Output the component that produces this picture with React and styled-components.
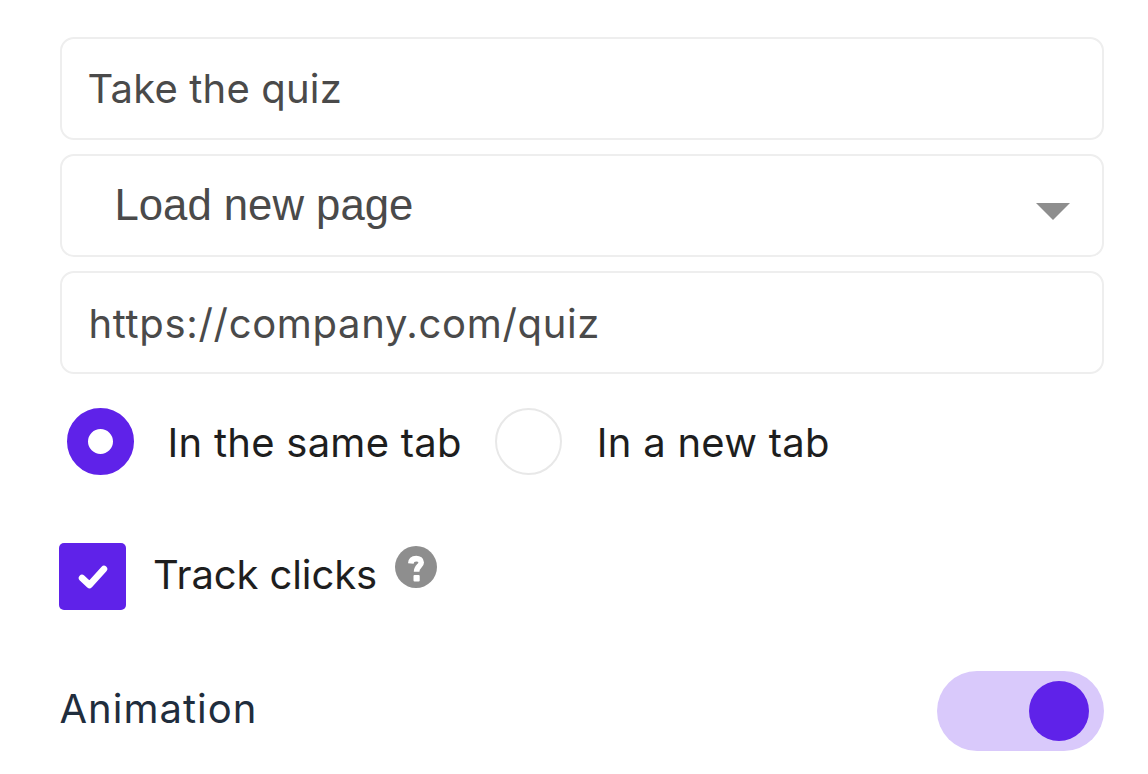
import React from 'react';
import styled, { createGlobalStyle } from 'styled-components';

const Global = createGlobalStyle`
  html, body { margin: 0; padding: 0; background: #fff; }
  body { font-family: "Open Sans", sans-serif; }
`;
const Page = styled.div`
  width: 1148px; height: 774px; box-sizing: border-box; overflow: hidden;
  padding: 37px 44.5px 0 59.5px;
  display: flex; flex-direction: column;
`;
const Fields = styled.div`
  display: flex; flex-direction: column; gap: 14px;
`;
const Field = styled.div`
  height: 103px; box-sizing: border-box;
  border: 2px solid #eeeeee; border-radius: 14px; background: #fff;
  display: flex; align-items: center; justify-content: space-between;
  padding: 0 32px ${p => p.$lift || 0}px ${p => p.$inset || 26}px;
  padding-top: ${p => p.$drop || 0}px;
  font-family: ${p => p.$native ? '"Liberation Sans"' : '"Inter"'}, sans-serif;
  font-size: ${p => p.$size || 40}px;
  color: #4a4a4a;
  letter-spacing: ${p => p.$track || 0}px;
`;
const Arrow = styled.svg`
  width: 34px; height: 17px; display: block; margin-top: 14px;
`;
const RadioRow = styled.div`
  display: flex; align-items: center; margin-top: 34px; padding-left: 7px;
`;
const Radio = styled.span`
  width: 67px; height: 67px; box-sizing: border-box; border-radius: 50%; flex: none;
  border: ${p => p.$on ? '21px solid #5f22e9' : '2px solid #e8e8e8'};
  background: #fff;
`;
const OptionText = styled.span`
  font-family: "Inter", sans-serif; font-size: 40px; color: #1e1e1e;
  letter-spacing: 0.26px;
  margin: 2px ${p => p.$after || 34}px 0 ${p => p.$before || 34}px;
`;
const CheckRow = styled.div`
  display: flex; align-items: center; margin-top: 68px; margin-left: -0.5px;
`;
const Box = styled.span`
  width: 67px; height: 67px; border-radius: 5px; background: #5f22e9; flex: none;
  display: flex; align-items: center; justify-content: center;
`;
const CheckText = styled.span`
  font-family: "Inter", sans-serif; font-size: 40px; color: #1e1e1e;
  letter-spacing: -0.1px;
  margin-left: 27px; margin-top: -4px;
`;
const Help = styled.svg`
  width: 42px; height: 42px; margin-left: 18px; margin-top: -20px; flex: none;
`;
const ToggleRow = styled.div`
  display: flex; align-items: center; justify-content: space-between; margin-top: 61px;
`;
const Label = styled.span`
  font-family: "Inter", sans-serif; font-size: 40px; color: #1f2d3d;
  letter-spacing: 1px; margin-top: -6px;
`;
const Toggle = styled.div`
  width: 167px; height: 80px; border-radius: 40px; background: #d9c9fb;
  display: flex; align-items: center; justify-content: flex-end; padding-right: 15px; box-sizing: border-box;
`;
const Knob = styled.span`
  width: 60px; height: 60px; border-radius: 50%; background: #5f22e9;
`;

export default function App() {
  return (
    <Page>
      <Global />
      <Fields>
        <Field $track={0.17}>Take the quiz</Field>
        <Field $native $inset={53} $size={43.7} $lift={2}>
          Load new page
          <Arrow viewBox="0 0 34 17"><path d="M0 0H34L17 17Z" fill="#8e8e8e" /></Arrow>
        </Field>
        <Field $inset={27} $drop={2} $track={0.67}>https://company.com/quiz</Field>
      </Fields>
      <RadioRow>
        <Radio $on />
        <OptionText $after={33}>In the same tab</OptionText>
        <Radio />
        <OptionText $before={35}>In a new tab</OptionText>
      </RadioRow>
      <CheckRow>
        <Box>
          <svg width="30" height="26" viewBox="0 0 30 26">
            <path d="M4 14L11.5 21L26 5" fill="none" stroke="#fff" strokeWidth="6.5" strokeLinecap="round" strokeLinejoin="round" />
          </svg>
        </Box>
        <CheckText>Track clicks</CheckText>
        <Help viewBox="0 0 42 42">
          <circle cx="21" cy="21" r="21" fill="#8e8e8e" />
          <path d="M15.8 17.5C16 13.8 18 12.6 21.2 12.6C24.2 12.6 26.2 14 26.2 16.4C26.2 20.2 21.6 20.2 21.6 25.8" fill="none" stroke="#fff" strokeWidth="5.6" />
          <rect x="18.5" y="29" width="6.2" height="6.4" rx="1" fill="#fff" />
        </Help>
      </CheckRow>
      <ToggleRow>
        <Label>Animation</Label>
        <Toggle><Knob /></Toggle>
      </ToggleRow>
    </Page>
  );
}
